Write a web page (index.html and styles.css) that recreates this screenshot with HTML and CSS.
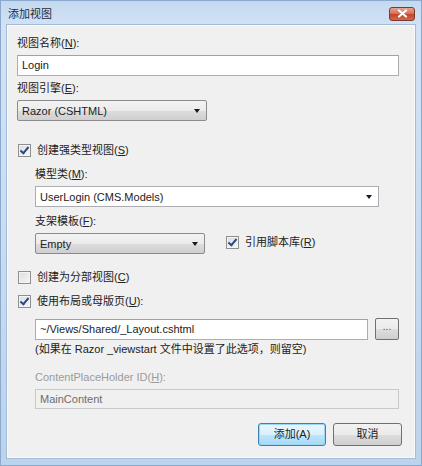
FILE: index.html
```html
<!DOCTYPE html>
<html>
<head>
<meta charset="utf-8">
<link rel="stylesheet" href="styles.css">
</head>
<body>
<div class="window">
  <div class="titlebar">
    <span class="title">添加视图</span>
    <span class="close"><svg width="11" height="9" viewBox="0 0 11 9"><path d="M2 1.5 L9 7.5 M9 1.5 L2 7.5" stroke="#fff" stroke-width="2.2" stroke-linecap="round"/></svg></span>
  </div>
  <div class="client">
    <div class="label l-name">视图名称(<u>N</u>):</div>
    <div class="textbox wide">Login</div>

    <div class="label l-engine">视图引擎(<u>E</u>):</div>
    <div class="combo btn-combo w-engine"><span>Razor (CSHTML)</span><i class="arrow"></i></div>

    <div class="check-row r-strong">
      <span class="cb checked"></span><span>创建强类型视图(<u>S</u>)</span>
    </div>

    <div class="indent">
      <div class="label l-model">模型类(<u>M</u>):</div>
      <div class="combo edit-combo w-model"><span>UserLogin (CMS.Models)</span><i class="arrow"></i></div>

      <div class="label l-scaffold">支架模板(<u>F</u>):</div>
      <div class="scaffold-row">
        <div class="combo btn-combo w-scaffold"><span>Empty</span><i class="arrow"></i></div>
        <div class="check-row inline">
          <span class="cb checked"></span><span>引用脚本库(<u>R</u>)</span>
        </div>
      </div>
    </div>

    <div class="check-row r-partial">
      <span class="cb"></span><span>创建为分部视图(<u>C</u>)</span>
    </div>
    <div class="check-row r-layout">
      <span class="cb checked"></span><span>使用布局或母版页(<u>U</u>):</span>
    </div>

    <div class="indent">
      <div class="layout-row">
        <div class="textbox w-layout">~/Views/Shared/_Layout.cshtml</div>
        <div class="browse">...</div>
      </div>
      <div class="note">(如果在 Razor _viewstart 文件中设置了此选项，则留空)</div>
      <div class="label disabled l-cph">ContentPlaceHolder ID(<u>H</u>):</div>
      <div class="textbox disabled-box">MainContent</div>
    </div>

    <div class="buttons">
      <div class="button default">添加(A)</div>
      <div class="button">取消</div>
    </div>
  </div>
</div>
</body>
</html>
```

FILE: styles.css
```css
* { box-sizing: border-box; }
html, body {
  margin: 0;
  padding: 0;
  width: 422px;
  height: 466px;
  overflow: hidden;
}
body {
  font-family: "Liberation Sans", "Noto Sans CJK SC", sans-serif;
  font-size: 11px;
  color: #222;
}
u { text-decoration: underline; text-underline-offset: 1px; }

.window {
  width: 422px;
  height: 466px;
  display: flex;
  flex-direction: column;
  background: linear-gradient(180deg, #c4d9f0 0%, #d3e3f5 6%, #c9dcf1 50%, #bcd3ec 100%);
  border: 1px solid #8aa9cc;
  padding: 0 6px 7px 6px;
}
.titlebar {
  height: 24px;
  flex: none;
  display: flex;
  align-items: center;
  justify-content: space-between;
  padding-left: 1px;
}
.title {
  font-family: "Noto Sans CJK SC", sans-serif;
  font-size: 11px;
  color: #1e2a3a;
  margin-top: -1px;
}
.close {
  width: 26px;
  height: 14px;
  margin-right: 0;
  margin-top: 1px;
  border: 1px solid #7a3a2e;
  border-radius: 3px;
  background: linear-gradient(180deg, #e8a491 0%, #d8735a 45%, #c5442b 55%, #d0684c 100%);
  display: flex;
  align-items: center;
  justify-content: center;
}
.close svg { display: block; }

.client {
  flex: 1;
  background: #f0f0f0;
  border: 1px solid #f7f9fc;
  outline: 1px solid #a3bcd9;
  display: flex;
  flex-direction: column;
  padding: 0 15px 0 9px;
}

.label { line-height: 15px; height: 15px; }
.l-name { margin-top: 10px; }
.l-engine { margin-top: 5px; }
.l-model { margin-top: 9px; }
.l-scaffold { margin-top: 7px; }
.l-cph { margin-top: 13px; }
.disabled { color: #9b9b9b; }

.textbox {
  height: 21px;
  border: 1px solid #abadb3;
  border-top-color: #a0a2a8;
  background: #fff;
  padding: 0 4px;
  line-height: 19px;
  margin-top: 4px;
}
.wide { width: 382px; }

.combo {
  height: 21px;
  display: flex;
  align-items: center;
  justify-content: space-between;
  padding: 0 6px 0 4px;
  margin-top: 4px;
}
.btn-combo {
  border: 1px solid #8b8b8b;
  border-radius: 2px;
  background: linear-gradient(180deg, #f3f3f3 0%, #ebebeb 50%, #dddddd 51%, #cfcfcf 100%);
}
.edit-combo {
  border: 1px solid #abadb3;
  background: #fff;
}
.arrow {
  width: 0;
  height: 0;
  border-left: 3.5px solid transparent;
  border-right: 3.5px solid transparent;
  border-top: 4px solid #1a1a1a;
}
.w-engine { width: 190px; }
.w-model { width: 344px; }
.w-scaffold { width: 170px; margin-top: 4px; }

.check-row {
  display: flex;
  align-items: center;
  height: 15px;
  line-height: 15px;
  gap: 6px;
  padding-left: 1px;
}
.r-strong { margin-top: 22px; }
.r-partial { margin-top: 16px; }
.r-layout { margin-top: 9px; }
.check-row.inline { margin-left: 20px; margin-top: 6px; }

.cb {
  width: 13px;
  height: 13px;
  border: 1px solid #8e8f8f;
  background: linear-gradient(135deg, #dcdcdc 0%, #f7f7f7 100%);
  box-shadow: inset 0 0 0 1px #f4f4f4;
  position: relative;
  flex: none;
}
.cb.checked::after {
  content: "";
  position: absolute;
  left: 3px;
  top: 0px;
  width: 3px;
  height: 7px;
  border-right: 2px solid #2b4a87;
  border-bottom: 2px solid #2b4a87;
  transform: rotate(40deg);
}

.indent {
  padding-left: 18px;
  display: flex;
  flex-direction: column;
}
.scaffold-row {
  display: flex;
  align-items: flex-start;
}
.layout-row {
  display: flex;
  align-items: flex-start;
  margin-top: 10px;
  gap: 7px;
}
.w-layout { width: 333px; margin-top: 0; }
.browse {
  width: 24px;
  height: 22px;
  margin-top: -1px;
  border: 1px solid #707070;
  border-radius: 2px;
  background: linear-gradient(180deg, #f2f2f2 0%, #ebebeb 50%, #dddddd 51%, #cfcfcf 100%);
  text-align: center;
  line-height: 15px;
  font-size: 10px;
  color: #555;
}
.note { margin-top: 2px; line-height: 15px; }
.disabled-box {
  width: 364px;
  height: 20px;
  line-height: 18px;
  background: #f0f0f0;
  border-color: #c9c9c9;
  color: #6d6d6d;
  margin-top: 4px;
}

.buttons {
  display: flex;
  justify-content: flex-end;
  gap: 7px;
  margin-top: 14px;
  margin-right: -3px;
}
.button {
  width: 69px;
  height: 23px;
  border: 1px solid #707070;
  border-radius: 3px;
  background: linear-gradient(180deg, #f2f2f2 0%, #ebebeb 50%, #dddddd 51%, #cfcfcf 100%);
  text-align: center;
  line-height: 21px;
}
.button.default {
  width: 68px;
  border-color: #3c7fb1;
  box-shadow: inset 0 0 0 1px #9dd6f5;
  background: linear-gradient(180deg, #eaf6fd 0%, #d9f0fc 50%, #bee6fd 51%, #a7d9f5 100%);
}
```
